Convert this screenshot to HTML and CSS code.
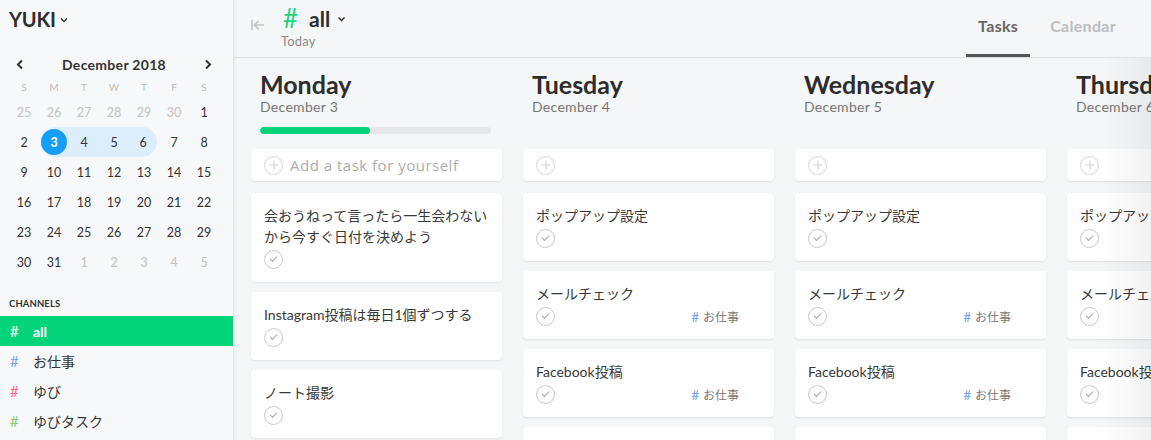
FILE: index.html
```html
<!DOCTYPE html>
<html lang="ja">
<head>
<meta charset="utf-8">
<title>Tasks</title>
<link rel="stylesheet" href="styles.css">
</head>
<body>
<aside class="sidebar">
  <div class="user">YUKI <svg class="chev" width="8" height="6" viewBox="0 0 8 6"><path d="M1 1.5l3 3 3-3" fill="none" stroke="#333" stroke-width="1.4"/></svg></div>

  <div class="cal-nav">
    <svg width="8" height="11" viewBox="0 0 8 11"><path d="M6 1.5L2 5.5l4 4" fill="none" stroke="#333" stroke-width="2"/></svg>
    <span class="cal-title">December 2018</span>
    <svg width="8" height="11" viewBox="0 0 8 11"><path d="M2 1.5l4 4-4 4" fill="none" stroke="#333" stroke-width="2"/></svg>
  </div>
  <div class="cal-grid">
    <span class="dow">S</span><span class="dow">M</span><span class="dow">T</span><span class="dow">W</span><span class="dow">T</span><span class="dow">F</span><span class="dow">S</span>
    <span class="d other">25</span><span class="d other">26</span><span class="d other">27</span><span class="d other">28</span><span class="d other">29</span><span class="d other">30</span><span class="d">1</span>
    <span class="d">2</span><span class="d r-start"><span class="sel">3</span></span><span class="d r-mid">4</span><span class="d r-mid">5</span><span class="d r-end">6</span><span class="d">7</span><span class="d">8</span>
    <span class="d">9</span><span class="d">10</span><span class="d">11</span><span class="d">12</span><span class="d">13</span><span class="d">14</span><span class="d">15</span>
    <span class="d">16</span><span class="d">17</span><span class="d">18</span><span class="d">19</span><span class="d">20</span><span class="d">21</span><span class="d">22</span>
    <span class="d">23</span><span class="d">24</span><span class="d">25</span><span class="d">26</span><span class="d">27</span><span class="d">28</span><span class="d">29</span>
    <span class="d">30</span><span class="d">31</span><span class="d other">1</span><span class="d other">2</span><span class="d other">3</span><span class="d other">4</span><span class="d other">5</span>
  </div>

  <div class="ch-label">CHANNELS</div>
  <ul class="channels">
    <li class="ch active"><span class="hash">#</span>all</li>
    <li class="ch"><span class="hash blue">#</span>お仕事</li>
    <li class="ch"><span class="hash pink">#</span>ゆび</li>
    <li class="ch"><span class="hash green">#</span>ゆびタスク</li>
  </ul>
</aside>

<main class="main">
  <header class="topbar">
    <svg class="back" width="14" height="12" viewBox="0 0 14 12"><path d="M1 1v10M3 6h10M7.5 2L3.5 6l4 4" fill="none" stroke="#c4c4c4" stroke-width="1.6"/></svg>
    <div class="title-block">
      <div class="title"><span class="t-hash">#</span>all<svg class="chev" width="9" height="6" viewBox="0 0 9 6"><path d="M1.5 1.5l3 3 3-3" fill="none" stroke="#333" stroke-width="1.5"/></svg></div>
      <div class="subtitle">Today</div>
    </div>
    <nav class="tabs">
      <span class="tab active">Tasks</span>
      <span class="tab">Calendar</span>
    </nav>
  </header>

  <div class="board">
    <section class="day">
      <div class="day-head">
        <h2>Monday</h2>
        <div class="date">December 3</div>
        <div class="progress"><div class="fill" style="width:47.5%"></div></div>
      </div>
      <div class="add"><span class="plus"></span>Add a task for yourself</div>
      <div class="card"><p>会おうねって言ったら一生会わない<br>から今すぐ日付を決めよう</p><div class="foot"><span class="check"></span></div></div>
      <div class="card"><p>Instagram投稿は毎日1個ずつする</p><div class="foot"><span class="check"></span></div></div>
      <div class="card"><p>ノート撮影</p><div class="foot"><span class="check"></span></div></div>
    </section>

    <section class="day">
      <div class="day-head">
        <h2>Tuesday</h2>
        <div class="date">December 4</div>
      </div>
      <div class="add"><span class="plus"></span></div>
      <div class="card"><p>ポップアップ設定</p><div class="foot"><span class="check"></span></div></div>
      <div class="card"><p>メールチェック</p><div class="foot"><span class="check"></span><span class="tag"><b>#</b>お仕事</span></div></div>
      <div class="card"><p>Facebook投稿</p><div class="foot"><span class="check"></span><span class="tag"><b>#</b>お仕事</span></div></div>
      <div class="card"><p>&nbsp;</p><div class="foot"><span class="check"></span></div></div>
    </section>

    <section class="day">
      <div class="day-head">
        <h2>Wednesday</h2>
        <div class="date">December 5</div>
      </div>
      <div class="add"><span class="plus"></span></div>
      <div class="card"><p>ポップアップ設定</p><div class="foot"><span class="check"></span></div></div>
      <div class="card"><p>メールチェック</p><div class="foot"><span class="check"></span><span class="tag"><b>#</b>お仕事</span></div></div>
      <div class="card"><p>Facebook投稿</p><div class="foot"><span class="check"></span><span class="tag"><b>#</b>お仕事</span></div></div>
      <div class="card"><p>&nbsp;</p><div class="foot"><span class="check"></span></div></div>
    </section>

    <section class="day">
      <div class="day-head">
        <h2>Thursday</h2>
        <div class="date">December 6</div>
      </div>
      <div class="add"><span class="plus"></span></div>
      <div class="card"><p>ポップアップ設定</p><div class="foot"><span class="check"></span></div></div>
      <div class="card"><p>メールチェック</p><div class="foot"><span class="check"></span><span class="tag"><b>#</b>お仕事</span></div></div>
      <div class="card"><p>Facebook投稿</p><div class="foot"><span class="check"></span><span class="tag"><b>#</b>お仕事</span></div></div>
      <div class="card"><p>&nbsp;</p><div class="foot"><span class="check"></span></div></div>
    </section>
    <div class="edge"></div>
  </div>
</main>
</body>
</html>
```

FILE: styles.css
```css
* { box-sizing: border-box; }
html, body { margin: 0; padding: 0; }
body {
  width: 1151px;
  height: 440px;
  overflow: hidden;
  display: flex;
  font-family: Lato, "Noto Sans CJK JP", sans-serif;
  color: #333;
  background: #f5f6f8;
}

/* Sidebar */
.sidebar {
  width: 234px;
  flex: none;
  background: #f7f8fa;
  border-right: 1px solid #e4e5e8;
  box-shadow: 1px 0 3px rgba(0,0,0,0.05);
  position: relative;
  z-index: 2;
}
.user {
  margin: 7px 0 0 9px;
  height: 24px;
  line-height: 24px;
  font-size: 20px;
  font-weight: 700;
  color: #2d2d2d;
  display: flex;
  align-items: center;
  letter-spacing: -0.2px;
}
.user .chev { margin-left: 4px; margin-top: 2px; }
.cal-nav {
  margin: 21px 0 0 16px;
  width: 196px;
  height: 24px;
  display: flex;
  align-items: center;
  justify-content: space-between;
}
.cal-title { font-size: 14px; font-weight: 700; color: #333; letter-spacing: 0.3px; }
.cal-grid {
  margin: 2px 0 0 9px;
  width: 210px;
  display: grid;
  grid-template-columns: repeat(7, 30px);
  grid-auto-rows: 30px;
  grid-template-rows: 19px;
}
.dow {
  font-size: 10px;
  color: #bdbdbd;
  text-align: center;
  line-height: 19px;
}
.d {
  font-size: 12.5px;
  color: #333;
  display: flex;
  align-items: center;
  justify-content: center;
}
.d.other { color: #c2c2c2; }
.r-start, .r-mid, .r-end { background: #dcedfb; }
.r-start { border-radius: 15px 0 0 15px; margin-left: 2px; }
.r-end { border-radius: 0 15px 15px 0; margin-right: 2px; }
.sel {
  width: 26px;
  height: 26px;
  border-radius: 50%;
  background: #139ff5;
  color: #fff;
  font-weight: 700;
  display: flex;
  align-items: center;
  justify-content: center;
  margin-left: -2px;
}
.ch-label {
  margin: 20px 0 0 9px;
  font-size: 9.5px;
  font-weight: 700;
  color: #333;
  line-height: 14px;
  letter-spacing: 0.1px;
}
.channels { list-style: none; margin: 5px 0 0; padding: 0; }
.ch {
  height: 30px;
  display: flex;
  align-items: center;
  padding-left: 10px;
  font-size: 14px;
  color: #333;
}
.ch .hash { width: 23px; font-size: 15px; color: #fff; }
.ch.active { background: #03d47c; color: #fff; font-weight: 700; }
.ch.active .hash { color: rgba(255,255,255,0.8); }
.hash.blue { color: #7ba4ef; }
.hash.pink { color: #f3679b; }
.hash.green { color: #8ccd78; }

/* Main */
.main {
  flex: 1;
  min-width: 0;
  display: flex;
  flex-direction: column;
  overflow: hidden;
}
.topbar {
  height: 58px;
  flex: none;
  border-bottom: 1px solid #dfe0e3;
  display: flex;
  align-items: flex-start;
  padding: 0 23px 0 17px;
}
.back { margin-top: 19px; }
.title-block { margin-left: 16px; margin-top: 5px; }
.title {
  display: flex;
  align-items: center;
  height: 26px;
  font-size: 21px;
  font-weight: 700;
  color: #2d2d2d;
}
.t-hash { color: #1ed47f; font-size: 26px; font-weight: 400; margin-right: 11px; margin-left: 2px; }
.title .chev { margin-left: 7px; margin-top: 2px; }
.subtitle { font-size: 13px; color: #8a8a8a; line-height: 18px; margin-top: 1px; letter-spacing: 0.2px; }
.tabs { margin-left: auto; display: flex; gap: 8px; height: 57px; }
.tab {
  padding: 0 12px;
  line-height: 52px;
  font-size: 16px;
  font-weight: 700;
  color: #bdbdbd;
  border-bottom: 3px solid transparent;
  height: 57px;
  letter-spacing: 0.3px;
}
.tab.active { color: #666; border-bottom-color: #555; }

/* Board */
.board {
  flex: 1;
  display: flex;
  gap: 21px;
  padding-left: 17px;
  position: relative;
  overflow: hidden;
}
.day { width: 251px; flex: none; }
.day-head { height: 91px; padding: 12px 9px 0; }
.day-head h2 {
  margin: 0;
  font-size: 25px;
  line-height: 28px;
  font-weight: 700;
  color: #2d2d2d;
}
.date { font-size: 14px; color: #777; line-height: 18px; letter-spacing: 0.3px; }
.progress {
  margin-top: 11px;
  height: 7px;
  width: 231px;
  border-radius: 4px;
  background: #e6e7e9;
  overflow: hidden;
}
.fill { height: 100%; background: #03d47c; border-radius: 4px; }

.add, .card {
  background: #fff;
  border-radius: 4px;
  box-shadow: 0 1px 2px rgba(0,0,0,0.09);
}
.add {
  height: 32px;
  margin-bottom: 12px;
  display: flex;
  align-items: center;
  padding-left: 13px;
  font-family: "Open Sans", "Noto Sans CJK JP", sans-serif;
  font-size: 15px;
  letter-spacing: 0.5px;
  color: #acacac;
}
.plus {
  width: 19px;
  height: 19px;
  border: 1px solid #d6d6d6;
  border-radius: 50%;
  margin-right: 7px;
  position: relative;
}
.plus::before, .plus::after {
  content: "";
  position: absolute;
  background: #d0d0d0;
  left: 50%;
  top: 50%;
  transform: translate(-50%, -50%);
}
.plus::before { width: 9px; height: 1px; }
.plus::after { width: 1px; height: 9px; }

.card {
  margin-bottom: 10px;
  padding: 12px 13px 13px;
}
.card p {
  margin: 0;
  font-size: 14px;
  line-height: 21px;
  color: #383838;
}
.foot { display: flex; align-items: center; margin-top: 3px; height: 19px; }
.check {
  width: 19px;
  height: 19px;
  border: 1px solid #c9c9c9;
  border-radius: 50%;
  position: relative;
}
.check::after {
  content: "";
  position: absolute;
  left: 5px;
  top: 4px;
  width: 6px;
  height: 3px;
  border-left: 1px solid #a8a8a8;
  border-bottom: 1px solid #a8a8a8;
  transform: rotate(-45deg);
  transform-origin: center;
  margin-top: 1px;
}
.tag {
  margin-left: auto;
  margin-right: 22px;
  font-size: 12px;
  color: #777;
}
.tag b { color: #6f9fe8; font-weight: 400; margin-right: 4px; font-size: 13px; }

.edge {
  position: absolute;
  top: 0;
  right: 0;
  bottom: 0;
  width: 50px;
  background: linear-gradient(to right, rgba(0,0,0,0), rgba(0,0,0,0.05));
  pointer-events: none;
}
```
